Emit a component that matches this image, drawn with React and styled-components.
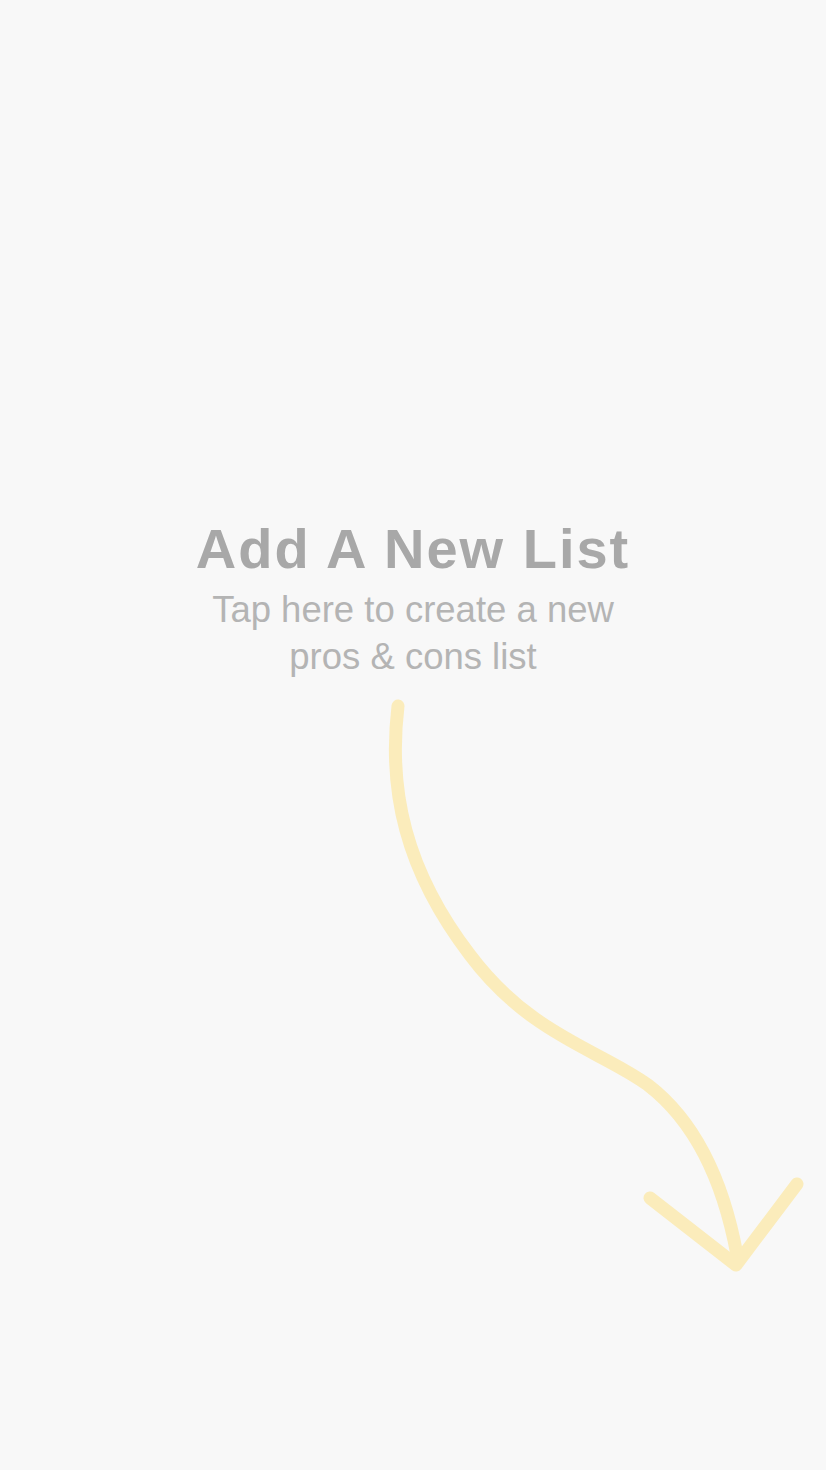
import React from "react";
import styled, { createGlobalStyle } from "styled-components";

const GlobalStyle = createGlobalStyle`
  html, body {
    margin: 0;
    padding: 0;
    background: #f8f8f8;
  }
`;

const Screen = styled.div`
  width: 826px;
  height: 1470px;
  background: #f8f8f8;
  display: flex;
  flex-direction: column;
  align-items: center;
  padding-top: 517px;
  box-sizing: border-box;
  overflow: hidden;
  font-family: "Liberation Sans", Arial, sans-serif;
`;

const Title = styled.h1`
  margin: 0;
  font-size: 56px;
  line-height: 64px;
  font-weight: 700;
  letter-spacing: 2px;
  color: #a8a8a8;
  text-align: center;
`;

const Subtitle = styled.p`
  margin: 5px 0 0;
  width: 440px;
  font-size: 36.5px;
  line-height: 47px;
  color: #b4b4b4;
  text-align: center;
`;

const Arrow = styled.svg`
  display: block;
  width: 826px;
  height: 620px;
  flex-shrink: 0;
`;

const App = () => {
  return (
    <>
      <GlobalStyle />
      <Screen>
        <Title>Add A New List</Title>
        <Subtitle>Tap here to create a new pros &amp; cons list</Subtitle>
        <Arrow viewBox="0 680 826 620">
          <g
            fill="none"
            stroke="#fbecbb"
            strokeWidth="13"
            strokeLinecap="round"
            strokeLinejoin="round"
          >
            <path d="M398 706 C 388 790, 405 870, 470 955 C 530 1035, 600 1050, 648 1085 C 700 1125, 725 1190, 737 1255" />
            <path d="M650 1198 L736 1265 L797 1184" />
          </g>
        </Arrow>
      </Screen>
    </>
  );
};

export default App;
